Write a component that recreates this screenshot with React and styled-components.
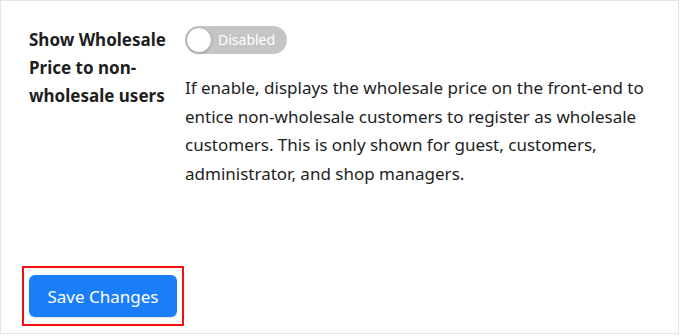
import React, { useState } from "react";
import styled, { createGlobalStyle } from "styled-components";

const Global = createGlobalStyle`
    html, body {
        margin: 0;
        padding: 0;
        background: #ffffff;
    }
    body {
        font-family: "Noto Sans", "Open Sans", sans-serif;
        color: #1e1e1e;
    }
`;

export default function App() {
    const [enabled, setEnabled] = useState(false);

    return (
        <>
            <Global />
            <Panel>
                <SettingRow>
                    <Label>Show Wholesale Price to non-wholesale users</Label>
                    <Field>
                        <Toggle $on={enabled} onClick={() => setEnabled(!enabled)}>
                            <Knob $on={enabled} />
                            <ToggleText>{enabled ? "Enabled" : "Disabled"}</ToggleText>
                        </Toggle>
                        <Help>
                            If enable, displays the wholesale price on the front-end to
                            entice non-wholesale customers to register as wholesale
                            customers. This is only shown for guest, customers,
                            administrator, and shop managers.
                        </Help>
                    </Field>
                </SettingRow>
                <Footer>
                    <Highlight>
                        <SaveButton>Save Changes</SaveButton>
                    </Highlight>
                </Footer>
            </Panel>
        </>
    );
}

const Panel = styled.div`
    box-sizing: border-box;
    width: 679px;
    height: 334px;
    border: 1px solid #e6e6e6;
    padding: 25px 28px 0 28px;
    display: flex;
    flex-direction: column;
`;

const SettingRow = styled.div`
    display: grid;
    grid-template-columns: 156px 1fr;
    align-items: start;
`;

const Label = styled.div`
    font-size: 17px;
    font-weight: 700;
    line-height: 28px;
    width: 148px;
    color: #1e1e1e;
`;

const Field = styled.div`
    display: flex;
    flex-direction: column;
    align-items: flex-start;
`;

const Toggle = styled.button`
    position: relative;
    box-sizing: border-box;
    width: 102px;
    height: 28px;
    border: none;
    border-radius: 14px;
    background: ${(p) => (p.$on ? "#1a7efb" : "#c5c5c5")};
    padding: 0 0 0 33px;
    display: flex;
    align-items: center;
    cursor: pointer;
    font-family: inherit;
`;

const Knob = styled.span`
    position: absolute;
    left: ${(p) => (p.$on ? "76px" : "1px")};
    top: 1px;
    width: 24px;
    height: 24px;
    border-radius: 50%;
    background: #ffffff;
    border: 1px solid #b0b0b0;
    box-shadow: 0 1px 2px rgba(0, 0, 0, 0.15);
`;

const ToggleText = styled.span`
    color: #ffffff;
    font-size: 14px;
    line-height: 1;
`;

const Help = styled.p`
    margin: 20px 0 0 0;
    font-size: 17px;
    line-height: 28.5px;
    color: #1e1e1e;
    max-width: 470px;
`;

const Footer = styled.div`
    margin-top: auto;
    padding-bottom: 7px;
`;

const Highlight = styled.div`
    display: inline-block;
    margin-left: -7px;
    border: 2px solid #ee1111;
    padding: 7px 5px 7px 5px;
`;

const SaveButton = styled.button`
    display: block;
    width: 148px;
    height: 42px;
    border: none;
    border-radius: 6px;
    background: #1a7efb;
    color: #ffffff;
    font-family: inherit;
    font-size: 17px;
    box-shadow: 0 1px 2px rgba(0, 0, 0, 0.12);
    cursor: pointer;
`;
